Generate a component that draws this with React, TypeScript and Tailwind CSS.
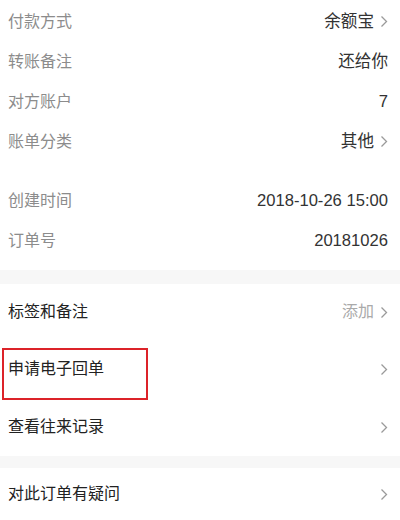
const font = { fontFamily: '"Liberation Sans", "Noto Sans CJK SC", sans-serif' };

const Chevron = () => (
  <svg width="8" height="13" viewBox="0 0 8 13" className="ml-[6px] shrink-0">
    <polyline points="1.5,1.5 6.5,6.5 1.5,11.5" fill="none" stroke="#9a9a9a" strokeWidth="1.3" />
  </svg>
);

type InfoRow = { label: string; value: string; arrow?: boolean };

const topRows: InfoRow[] = [
  { label: "付款方式", value: "余额宝", arrow: true },
  { label: "转账备注", value: "还给你" },
  { label: "对方账户", value: "7" },
  { label: "账单分类", value: "其他", arrow: true }
];

const timeRows: InfoRow[] = [
  { label: "创建时间", value: "2018-10-26 15:00" },
  { label: "订单号", value: "20181026" }
];

const DetailRow = ({ row }: { row: InfoRow }) => (
  <div className="flex h-10 items-center justify-between pl-2 pr-3">
    <span className="text-[16px] text-[#8c8c8c]">{row.label}</span>
    <span className="flex items-center text-[16.6px] text-[#333333]">
      {row.value}
      {row.arrow ? <Chevron /> : null}
    </span>
  </div>
);

export default function App() {
  return (
    <div className="h-[520px] w-[400px] overflow-hidden bg-white" style={font}>
      <div className="pt-[2px] pb-[9px]">
        {topRows.map((row) => (
          <DetailRow key={row.label} row={row} />
        ))}
        <div className="h-[19px]" />
        {timeRows.map((row) => (
          <DetailRow key={row.label} row={row} />
        ))}
      </div>

      <div className="h-[14px] bg-[#f7f7f7]" />

      <div className="flex h-[56px] items-center justify-between pl-2 pr-3">
        <span className="text-[16px] text-[#222222]">标签和备注</span>
        <span className="flex items-center text-[16px] text-[#aaaaaa]">
          添加
          <Chevron />
        </span>
      </div>
      <div className="relative flex h-[58px] items-center justify-between pl-2 pr-3">
        <span className="text-[16px] text-[#222222]">申请电子回单</span>
        <Chevron />
        <div className="absolute left-[2px] top-[8px] h-[52px] w-[146px] border-2 border-[#dc2329]" />
      </div>
      <div className="flex h-[58px] items-center justify-between pl-2 pr-3">
        <span className="text-[16px] text-[#222222]">查看往来记录</span>
        <Chevron />
      </div>

      <div className="h-[12px] bg-[#f7f7f7]" />

      <div className="flex h-[52px] items-center justify-between pl-2 pr-3">
        <span className="text-[16px] text-[#222222]">对此订单有疑问</span>
        <Chevron />
      </div>
    </div>
  );
}
